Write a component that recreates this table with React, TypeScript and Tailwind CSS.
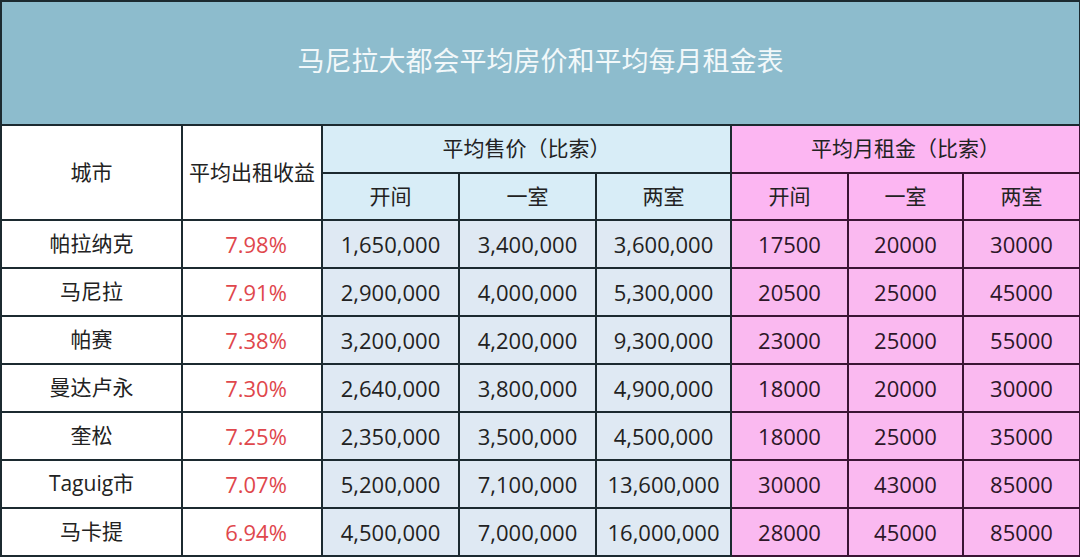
import React from "react";

const rows = [
  { city: "帕拉纳克", yld: "7.98%", sale: ["1,650,000", "3,400,000", "3,600,000"], rent: ["17500", "20000", "30000"] },
  { city: "马尼拉", yld: "7.91%", sale: ["2,900,000", "4,000,000", "5,300,000"], rent: ["20500", "25000", "45000"] },
  { city: "帕赛", yld: "7.38%", sale: ["3,200,000", "4,200,000", "9,300,000"], rent: ["23000", "25000", "55000"] },
  { city: "曼达卢永", yld: "7.30%", sale: ["2,640,000", "3,800,000", "4,900,000"], rent: ["18000", "20000", "30000"] },
  { city: "奎松", yld: "7.25%", sale: ["2,350,000", "3,500,000", "4,500,000"], rent: ["18000", "25000", "35000"] },
  { city: "Taguig市", yld: "7.07%", sale: ["5,200,000", "7,100,000", "13,600,000"], rent: ["30000", "43000", "85000"] },
  { city: "马卡提", yld: "6.94%", sale: ["4,500,000", "7,000,000", "16,000,000"], rent: ["28000", "45000", "85000"] },
];

const font = { fontFamily: '"Open Sans", "Noto Sans CJK SC", sans-serif' };

export default function App() {
  const cell = "border-2 border-[#1c2a30] text-center align-middle p-0";
  const pink = "border-2 border-[#3a1434] text-center align-middle p-0";

  return (
    <div className="w-[1080px] h-[557px] overflow-hidden bg-white" style={font}>
      <table className="border-collapse table-fixed w-[1079px] text-[#222] text-[21px]">
        <colgroup>
          <col className="w-[181px]" />
          <col className="w-[140px]" />
          <col className="w-[137px]" />
          <col className="w-[137px]" />
          <col className="w-[135px]" />
          <col className="w-[117px]" />
          <col className="w-[115px]" />
          <col className="w-[117px]" />
        </colgroup>
        <tbody>
          <tr className="h-[124px]">
            <td colSpan={8} className={`${cell} bg-[#8dbccd] text-[#f2f8fa] text-[27px] pb-1`}>
              马尼拉大都会平均房价和平均每月租金表
            </td>
          </tr>
          <tr className="h-[48px]">
            <td rowSpan={2} className={`${cell} bg-white`}>城市</td>
            <td rowSpan={2} className={`${cell} bg-white whitespace-nowrap`}>平均出租收益</td>
            <td colSpan={3} className={`${cell} bg-[#d8edf7]`}>平均售价（比索）</td>
            <td colSpan={3} className={`${pink} bg-[#fcb6f2]`}>平均月租金（比索）</td>
          </tr>
          <tr className="h-[47px]">
            <td className={`${cell} bg-[#d8edf7]`}>开间</td>
            <td className={`${cell} bg-[#d8edf7]`}>一室</td>
            <td className={`${cell} bg-[#d8edf7]`}>两室</td>
            <td className={`${pink} bg-[#fcb6f2]`}>开间</td>
            <td className={`${pink} bg-[#fcb6f2]`}>一室</td>
            <td className={`${pink} bg-[#fcb6f2]`}>两室</td>
          </tr>
          {rows.map((r) => (
            <tr key={r.city} className="h-[48px] text-[22px]">
              <td className={`${cell} bg-white text-[21px]`}>{r.city}</td>
              <td className={`${cell} bg-white text-[#e0474c] pl-2`}>{r.yld}</td>
              {r.sale.map((s, i) => (
                <td key={i} className={`${cell} bg-[#dfe9f3]`}>{s}</td>
              ))}
              {r.rent.map((s, i) => (
                <td key={i} className={`${pink} bg-[#fab9f0] text-[#2c1628]`}>{s}</td>
              ))}
            </tr>
          ))}
        </tbody>
      </table>
    </div>
  );
}
